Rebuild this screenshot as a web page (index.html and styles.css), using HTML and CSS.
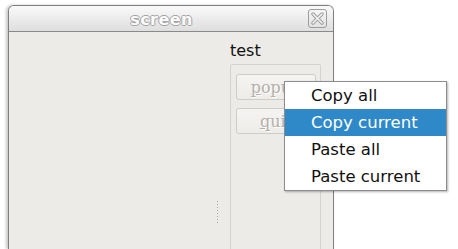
FILE: index.html
```html
<!DOCTYPE html>
<html lang="en">
<head>
    <meta charset="UTF-8">
    <title>screen</title>
    <link rel="stylesheet" href="styles.css">
</head>
<body>
    <div class="window">
        <div class="titlebar">
            <span class="title">screen</span>
            <span class="close-btn">
                <svg width="13" height="13" viewBox="0 0 13 13">
                    <path d="M2 2 L11 11 M11 2 L2 11" stroke="#9a9a9a" stroke-width="3.4" stroke-linecap="round"/>
                    <path d="M2 2 L11 11 M11 2 L2 11" stroke="#f4f4f4" stroke-width="1.6" stroke-linecap="round"/>
                </svg>
            </span>
        </div>

        <div class="content">
            <div class="left-pane"></div>
            <div class="splitter"><div class="grip"></div></div>
            <div class="right-pane">
                <div class="label">test</div>
                <div class="group">
                    <button class="btn" disabled><u>p</u>opup</button>
                    <button class="btn" disabled><u>q</u>uit</button>
                </div>
            </div>
        </div>
    </div>

    <!-- popup menu -->
    <ul class="menu">
        <li>Copy all</li>
        <li class="active">Copy current</li>
        <li>Paste all</li>
        <li>Paste current</li>
    </ul>
</body>
</html>
```

FILE: styles.css
```css
* {
    margin: 0;
    padding: 0;
    box-sizing: border-box;
}

html, body {
    height: 100%;
    overflow: hidden;
}

body {
    background: #ffffff;
    font-family: 'DejaVu Sans', sans-serif;
    padding: 5px 0 0 8px;
    position: relative;
}

.window {
    width: 326px;
    height: 100%;
    border: 1px solid #7e7e7e;
    border-bottom: none;
    border-radius: 6px 6px 0 0;
    background: #edebe7;
    box-shadow: -2px 0 3px rgba(0,0,0,0.22);
    display: flex;
    flex-direction: column;
}

.titlebar {
    height: 26px;
    display: flex;
    align-items: center;
    border-bottom: 1px solid #8a8a8a;
    border-radius: 5px 5px 0 0;
    background: linear-gradient(#fafafa, #dedede);
    padding-right: 6px;
}

.title {
    flex: 1;
    text-align: center;
    font-family: 'DejaVu Sans', sans-serif;
    font-weight: 700;
    font-size: 16px;
    letter-spacing: 0.4px;
    color: #fbfbfb;
    text-shadow: 1px 0 0 #a3a3a3, -1px 0 0 #a3a3a3, 0 1px 0 #a3a3a3, 0 -1px 0 #a3a3a3;
    padding-left: 6px;
    padding-top: 1px;
}

.close-btn {
    width: 19px;
    height: 19px;
    border: 1px solid #9c9c9c;
    border-radius: 3px;
    background: linear-gradient(#f6f6f6, #e2e2e2);
    display: flex;
    align-items: center;
    justify-content: center;
}

.content {
    flex: 1;
    display: flex;
}

.left-pane {
    width: 205px;
}

.splitter {
    width: 7px;
    padding-top: 169px;
    display: flex;
    justify-content: center;
}

.grip {
    width: 1px;
    height: 23px;
    background: repeating-linear-gradient(#a9a6a1 0 1px, transparent 1px 3px);
}

.right-pane {
    flex: 1;
    padding: 9px 12px 0 9px;
    display: flex;
    flex-direction: column;
}

.label {
    font-size: 16px;
    line-height: 19px;
    color: #111;
    margin-bottom: 4px;
}

.group {
    flex: 1;
    border: 1px solid #d6d3ce;
    border-bottom: none;
    border-radius: 2px 2px 0 0;
    padding: 9px 4px 0 5px;
    display: flex;
    flex-direction: column;
    gap: 8px;
}

.btn {
    height: 26px;
    border: 1px solid #cfccc7;
    border-radius: 3px;
    background: linear-gradient(#f5f4f2, #eeece9);
    font-family: 'DejaVu Serif', serif;
    font-size: 16px;
    color: #b3afa9;
    text-shadow: 1px 1px 0 #ffffff;
}

.btn u {
    text-decoration-color: #b3afa9;
}

.menu {
    position: absolute;
    left: 284px;
    top: 81px;
    width: 163px;
    list-style: none;
    background: #ffffff;
    border: 1px solid #8d8d8d;
    box-shadow: 1px 1px 2px rgba(0,0,0,0.3);
}

.menu li {
    height: 27px;
    line-height: 27px;
    padding-left: 26px;
    font-size: 16.5px;
    color: #111;
}

.menu li.active {
    background: #2f89c8;
    color: #ffffff;
}
```
